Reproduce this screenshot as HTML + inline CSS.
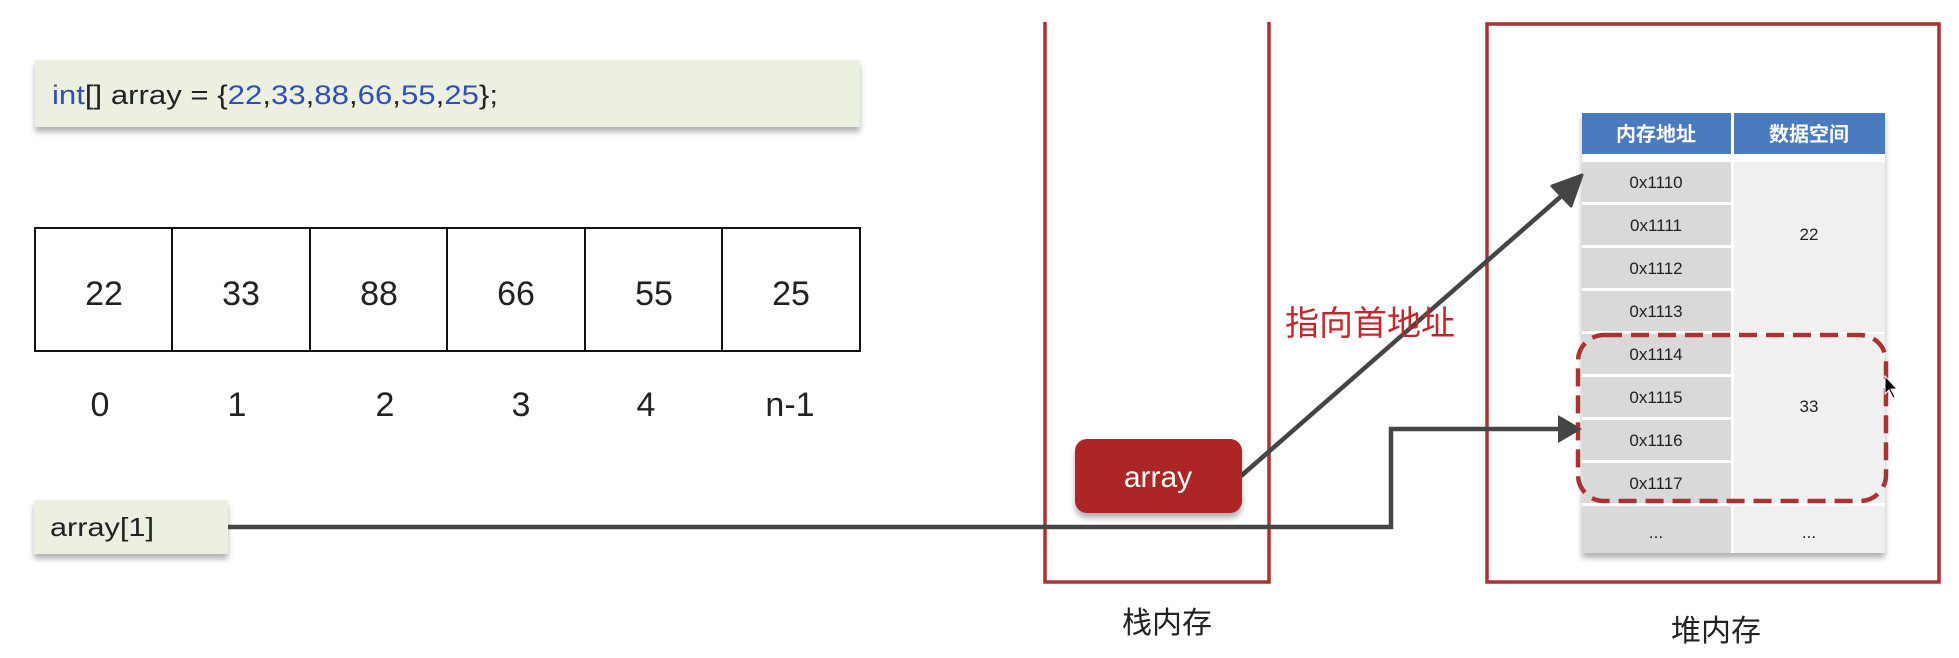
<!DOCTYPE html>
<html><head><meta charset="utf-8"><style>
html,body{margin:0;padding:0;background:#fff;width:1959px;height:658px;overflow:hidden}
</style></head><body>
<svg width="1959" height="658" xmlns="http://www.w3.org/2000/svg" style="position:absolute;left:0;top:0">
<defs>
<filter id="sh" x="-5%" y="-20%" width="110%" height="160%"><feDropShadow dx="0" dy="5" stdDeviation="3" flood-color="#000" flood-opacity="0.3"/></filter>
</defs>
<rect x="35" y="60" width="825" height="67" fill="#ebf0e1" filter="url(#sh)"/>
<text x="52" y="104" textLength="446" lengthAdjust="spacingAndGlyphs" font-family="Liberation Sans Narrow, Liberation Sans, sans-serif" font-size="27" fill="#222"><tspan fill="#2f4fb8">int</tspan>[] array = {<tspan fill="#2f4fb8">22</tspan>,<tspan fill="#2f4fb8">33</tspan>,<tspan fill="#2f4fb8">88</tspan>,<tspan fill="#2f4fb8">66</tspan>,<tspan fill="#2f4fb8">55</tspan>,<tspan fill="#2f4fb8">25</tspan>};</text>
<g stroke="#111" stroke-width="2" fill="#fff">
<rect x="35" y="228" width="825" height="123"/>
<line x1="172" y1="228" x2="172" y2="351"/><line x1="310" y1="228" x2="310" y2="351"/><line x1="447" y1="228" x2="447" y2="351"/><line x1="585" y1="228" x2="585" y2="351"/><line x1="722" y1="228" x2="722" y2="351"/>
</g>
<g font-family="Liberation Sans, sans-serif" font-size="34" fill="#222" text-anchor="middle">
<text x="104" y="305">22</text><text x="241" y="305">33</text><text x="379" y="305">88</text><text x="516" y="305">66</text><text x="654" y="305">55</text><text x="791" y="305">25</text>
<text x="100" y="416">0</text><text x="237" y="416">1</text><text x="385" y="416">2</text><text x="521" y="416">3</text><text x="646" y="416">4</text><text x="790" y="416">n-1</text>
</g>
<rect x="34" y="500" width="194" height="54" fill="#ebf0e1" filter="url(#sh)"/>
<text x="50" y="536" textLength="104" lengthAdjust="spacingAndGlyphs" font-family="Liberation Sans Narrow, Liberation Sans, sans-serif" font-size="26" fill="#222">array[1]</text>
<path d="M1045 22 V582 H1269 V22" fill="none" stroke="#a93232" stroke-width="3.5"/>
<rect x="1487" y="24" width="452" height="558" fill="none" stroke="#a93232" stroke-width="3.5"/>
<g filter="url(#sh)">
<rect x="1582" y="113" width="303" height="440" fill="#fff"/>
</g>
<rect x="1582" y="113" width="149" height="41" fill="#4a7bbf"/>
<rect x="1734" y="113" width="151" height="41" fill="#4a7bbf"/>
<g font-family="Liberation Sans, 'Noto Sans CJK SC', sans-serif" font-size="20" font-weight="bold" fill="#fff" text-anchor="middle">
<text x="1656" y="141">内存地址</text><text x="1809" y="141">数据空间</text>
</g>
<g fill="#d9d9d9">
<rect x="1582" y="162" width="149" height="40"/><rect x="1582" y="205" width="149" height="40"/><rect x="1582" y="248" width="149" height="40"/><rect x="1582" y="291" width="149" height="40"/><rect x="1582" y="334" width="149" height="40"/><rect x="1582" y="377" width="149" height="40"/><rect x="1582" y="420" width="149" height="40"/><rect x="1582" y="463" width="149" height="40"/><rect x="1582" y="506" width="149" height="47"/>
</g>
<rect x="1734" y="162" width="151" height="170" fill="#f0f0f0"/>
<rect x="1734" y="334" width="151" height="169" fill="#f0f0f0"/>
<rect x="1734" y="506" width="151" height="47" fill="#f0f0f0"/>
<g font-family="Liberation Sans, sans-serif" font-size="17" fill="#222" text-anchor="middle">
<text x="1656" y="188">0x1110</text><text x="1656" y="231">0x1111</text><text x="1656" y="274">0x1112</text><text x="1656" y="317">0x1113</text><text x="1656" y="360">0x1114</text><text x="1656" y="403">0x1115</text><text x="1656" y="446">0x1116</text><text x="1656" y="489">0x1117</text><text x="1656" y="538">...</text>
<text x="1809" y="240">22</text><text x="1809" y="412">33</text><text x="1809" y="538">...</text>
</g>
<rect x="1578" y="335" width="308" height="166" rx="26" fill="none" stroke="#a93232" stroke-width="4.5" stroke-dasharray="18 9"/>
<path d="M228 527 H1391 V429 H1562" fill="none" stroke="#454545" stroke-width="4.5"/>
<path d="M1558 415 L1582 429 L1558 443 Z" fill="#454545"/>
<line x1="1241" y1="476" x2="1566" y2="192" stroke="#454545" stroke-width="4.5"/>
<path d="M1582 175 L1552 186 L1571 206 Z" fill="#454545" stroke="#454545" stroke-width="3" stroke-linejoin="round"/>
<rect x="1075" y="439" width="167" height="74" rx="12" fill="#ad2828" filter="url(#sh)"/>
<text x="1158" y="487" font-family="Liberation Sans, sans-serif" font-size="30" fill="#fff" text-anchor="middle">array</text>
<text x="1370" y="335" font-family="Liberation Sans, 'Noto Sans CJK SC', sans-serif" font-size="34" fill="#c0282d" text-anchor="middle">指向首地址</text>
<text x="1167" y="633" font-family="Liberation Sans, 'Noto Sans CJK SC', sans-serif" font-size="30" fill="#222" text-anchor="middle">栈内存</text>
<text x="1716" y="641" font-family="Liberation Sans, 'Noto Sans CJK SC', sans-serif" font-size="30" fill="#222" text-anchor="middle">堆内存</text>
<path d="M1885 376 L1885 394 L1889 390 L1893 398 L1895 397 L1891 389 L1897 389 Z" fill="#000" stroke="#fff" stroke-width="1"/>
</svg>
</body></html>
